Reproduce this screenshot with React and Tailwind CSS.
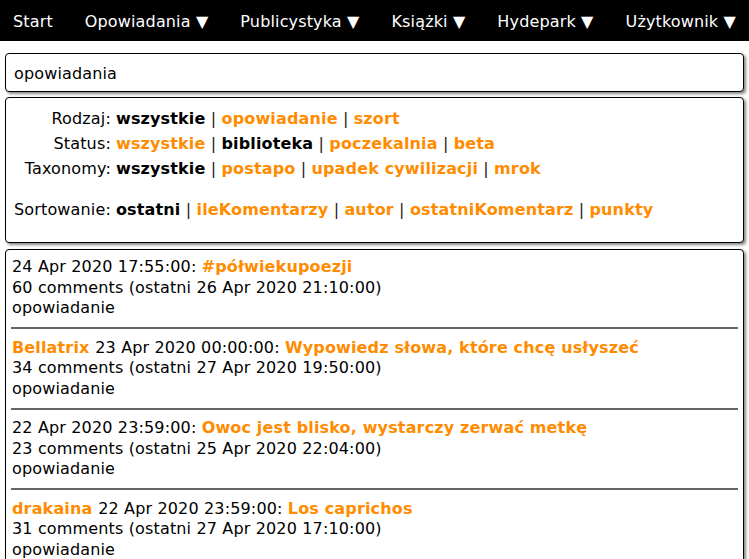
import React from 'react';

const ORANGE = 'text-[#ff8c00]';

const navItems = ['Start', 'Opowiadania ▼', 'Publicystyka ▼', 'Książki ▼', 'Hydepark ▼', 'Użytkownik ▼'];

const filters = [
  { label: 'Rodzaj:', items: [['wszystkie', true], ['opowiadanie'], ['szort']] },
  { label: 'Status:', items: [['wszystkie'], ['biblioteka', true], ['poczekalnia'], ['beta']] },
  { label: 'Taxonomy:', items: [['wszystkie', true], ['postapo'], ['upadek cywilizacji'], ['mrok']] },
];

const sorting = { label: 'Sortowanie:', items: [['ostatni', true], ['ileKomentarzy'], ['autor'], ['ostatniKomentarz'], ['punkty']] };

const posts = [
  { author: null, date: '24 Apr 2020 17:55:00', title: '#półwiekupoezji', comments: 60, last: '26 Apr 2020 21:10:00' },
  { author: 'Bellatrix', date: '23 Apr 2020 00:00:00', title: 'Wypowiedz słowa, które chcę usłyszeć', comments: 34, last: '27 Apr 2020 19:50:00' },
  { author: null, date: '22 Apr 2020 23:59:00', title: 'Owoc jest blisko, wystarczy zerwać metkę', comments: 23, last: '25 Apr 2020 22:04:00' },
  { author: 'drakaina', date: '22 Apr 2020 23:59:00', title: 'Los caprichos', comments: 31, last: '27 Apr 2020 17:10:00' },
];

const box = 'mx-[5px] border border-black rounded-[4px] bg-white shadow-[2px_2px_3px_#888]';

function FilterRow({ row }) {
  return (
    <>
      <div className="text-right pr-[5px] whitespace-nowrap">{row.label}</div>
      <div className="whitespace-nowrap">
        {row.items.map(([name, active], i) => (
          <span key={name}>
            {i > 0 && <span className="text-[#222]"> | </span>}
            <span className={active ? 'font-bold text-black' : `font-bold ${ORANGE}`}>{name}</span>
          </span>
        ))}
      </div>
    </>
  );
}

export default function App() {
  return (
    <div
      className="min-h-[559px] bg-white text-black text-[16px] tracking-[0.15px]"
      style={{ fontFamily: '"DejaVu Sans", Verdana, sans-serif' }}
    >
      <nav className="h-[41px] bg-black text-white flex items-center justify-between px-[13px] pt-[2px]">
        {navItems.map((n) => (
          <span key={n}>{n}</span>
        ))}
      </nav>

      <div className={`${box} mt-[12px] h-[39px] flex items-center px-[8px] pt-[3px]`}>opowiadania</div>

      <div className={`${box} mt-[5px] h-[146px] pl-[8px] pt-[8px] leading-[25px]`}>
        <div className="grid grid-cols-[auto_1fr]">
          {filters.map((f) => (
            <FilterRow key={f.label} row={f} />
          ))}
          <div className="col-span-2 h-[16px]" />
          <FilterRow row={sorting} />
        </div>
      </div>

      <div className={`${box} mt-[6px] px-[5px] pt-[7px] pb-[10px] leading-[20.5px]`}>
        {posts.map((p, i) => (
          <div key={p.title}>
            {i > 0 && <hr className="border-0 h-[2px] bg-[#666] mt-[8.5px] mb-[8.5px]" />}
            <div className="pl-[1px]">
              <div>
                {p.author && <span className={`font-bold ${ORANGE}`}>{p.author} </span>}
                {p.date}: <span className={`font-bold ${ORANGE}`}>{p.title}</span>
              </div>
              <div>
                {p.comments} comments (ostatni {p.last})
              </div>
              <div>opowiadanie</div>
            </div>
          </div>
        ))}
      </div>
    </div>
  );
}
